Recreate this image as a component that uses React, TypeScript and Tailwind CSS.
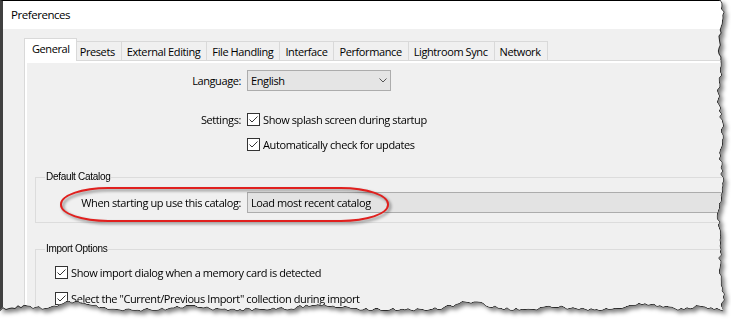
import { useMemo } from "react"

const tabs = ["General", "Presets", "External Editing", "File Handling", "Interface", "Performance", "Lightroom Sync", "Network"]

type Pt = [number, number]

const makeEdges = () => {
  let s = 11
  const rand = () => {
    s = (s * 16807) % 2147483647
    return s / 2147483647
  }
  const right: Pt[] = []
  for (let y = 0; y <= 306; y += 3) {
    const x = 721 + 1.4 * Math.sin(y / 9) + 1.1 * Math.sin(y / 23 + 1) + (rand() - 0.5) * 3
    right.push([x, y])
  }
  const bumps = [[25, 3, 10], [75, 8, 16], [190, 3, 15], [320, 5, 18], [470, 8, 16], [555, 3, 12], [645, 6, 14], [700, 3, 10]]
  const bottom: Pt[] = []
  for (let x = 723; x >= 0; x -= 3) {
    let y = 310
    for (const [c, h, w] of bumps) y -= h * Math.exp(-((x - c) ** 2) / (2 * w * w))
    y += (rand() - 0.5) * 3
    bottom.push([x, y])
  }
  return { right, bottom }
}

const polygon = (right: Pt[], bottom: Pt[], inset: number) => {
  const pts: string[] = ["0px 0px"]
  right.forEach(([x, y]) => pts.push(`${x - inset}px ${y}px`))
  bottom.forEach(([x, y]) => pts.push(`${x}px ${y - inset}px`))
  pts.push(`0px ${bottom[bottom.length - 1][1] - inset}px`)
  return `polygon(${pts.join(",")})`
}

const Check = () => (
  <span className="w-[13px] h-[13px] border border-[#333333] bg-white flex items-center justify-center shrink-0">
    <svg width="11" height="11" viewBox="0 0 11 11">
      <path d="M1.5 5.5 L4 8 L9.5 2.5" fill="none" stroke="#333333" strokeWidth="1" />
    </svg>
  </span>
)

const CheckRow = ({ label }: { label: string }) => (
  <div className="flex items-center gap-[3px] h-[20px]">
    <Check />
    <span>{label}</span>
  </div>
)

const GroupBox = ({ title, children, className }: { title: string; children: React.ReactNode; className?: string }) => (
  <fieldset className={"ml-[8px] border border-[#dcdcdc] " + (className ?? "")}>
    <legend className="ml-[9px] px-[1px] font-['Liberation_Sans',sans-serif] text-[10px] leading-[12px] tracking-[-0.3px]">
      {title}
    </legend>
    {children}
  </fieldset>
)

export default function App() {
  const { right, bottom } = useMemo(makeEdges, [])
  const outerClip = polygon(right, bottom, 0)
  const innerClip = polygon(right, bottom, 1)

  return (
    <div className="relative w-[731px] h-[319px] overflow-hidden bg-white font-['Open_Sans',sans-serif] text-[11px] leading-[15px] tracking-[-0.4px] text-black">
      <div className="drop-shadow-[3px_3px_2px_rgba(0,0,0,0.5)]">
        <div className="w-[760px] h-[330px] bg-[#2a2a2a]" style={{ clipPath: outerClip }}>
          <div
            className="w-[760px] h-[330px] bg-[#f0f0f0] border-t border-t-black border-l-[3px] border-l-[#404040] flex flex-col"
            style={{ clipPath: innerClip }}
          >
            <div className="h-[28px] shrink-0 bg-white flex items-center pl-[8px] pb-[2px]">
              <span className="text-[11.5px] tracking-[-0.45px]">Preferences</span>
            </div>

            <div className="pt-[9px] pl-[21px] flex flex-col">
              <div className="flex items-end h-[22px]">
                {tabs.map((t, i) =>
                  i === 0 ? (
                    <div
                      key={t}
                      className="relative z-10 h-[23px] -mb-[1px] pl-[7px] pr-[6px] pb-[3px] border border-b-0 border-[#d9d9d9] bg-white flex items-center"
                    >
                      {t}
                    </div>
                  ) : (
                    <div
                      key={t}
                      className={
                        "h-[19px] border-t border-r border-[#d9d9d9] bg-[#f0f0f0] flex items-center pr-[6px] " +
                        (i === 1 ? "pl-[3px]" : "pl-[5px]")
                      }
                    >
                      {t}
                    </div>
                  )
                )}
              </div>

              <div className="border border-[#d9d9d9] bg-white p-[2px]">
                <div className="bg-[#f0f0f0] flex flex-col pt-[7px] pb-[40px]">
                  <div className="flex items-center">
                    <span className="w-[214px] text-right">Language:</span>
                    <div className="ml-[6px] w-[144px] h-[21px] border border-[#acacac] bg-[#e5e5e5] flex items-center justify-between pl-[3px] pr-[3px]">
                      <span>English</span>
                      <svg width="8" height="5" viewBox="0 0 8 5">
                        <path d="M0.5 0.5 L4 4 L7.5 0.5" fill="none" stroke="#555555" strokeWidth="1" />
                      </svg>
                    </div>
                  </div>

                  <div className="flex items-center mt-[18px]">
                    <span className="w-[214px] text-right">Settings:</span>
                    <div className="ml-[6px]">
                      <CheckRow label="Show splash screen during startup" />
                    </div>
                  </div>
                  <div className="flex items-center mt-[5px]">
                    <span className="w-[214px]" />
                    <div className="ml-[6px]">
                      <CheckRow label="Automatically check for updates" />
                    </div>
                  </div>

                  <GroupBox title="Default Catalog" className="mt-[17px] pb-[9px]">
                    <div className="flex items-center mt-[9px]">
                      <span className="w-[205px] text-right">When starting up use this catalog:</span>
                      <div className="ml-[6px] flex-1 h-[21px] border border-[#acacac] bg-[#e3e3e3] flex items-center pl-[3px]">
                        Load most recent catalog
                      </div>
                    </div>
                  </GroupBox>

                  <GroupBox title="Import Options" className="mt-[20px] pb-[10px]">
                    <div className="pl-[19px] flex flex-col">
                      <div className="mt-[7px]">
                        <CheckRow label="Show import dialog when a memory card is detected" />
                      </div>
                      <div className="mt-[6px]">
                        <CheckRow label={'Select the "Current/Previous Import" collection during import'} />
                      </div>
                    </div>
                  </GroupBox>
                </div>
              </div>
            </div>
          </div>
        </div>
      </div>

      <div className="absolute left-[60px] top-[187px] w-[329px] h-[35px] rounded-[48px/17px] border-2 border-[#e0201e] drop-shadow-[2px_2px_1.5px_rgba(0,0,0,0.45)]" />
    </div>
  )
}
